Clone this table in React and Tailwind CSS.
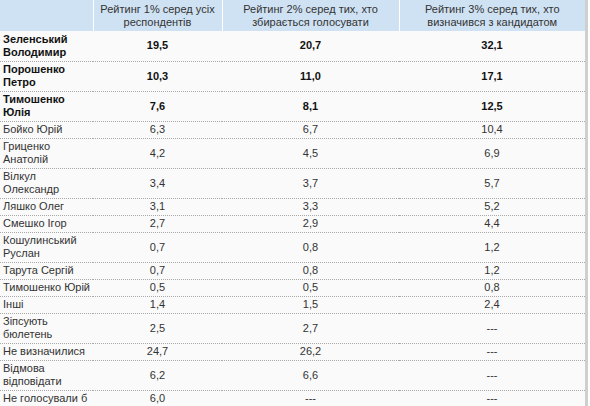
const rows = [
  { name: ['Зеленський', 'Володимир'], a: '19,5', b: '20,7', c: '32,1', bold: true },
  { name: ['Порошенко', 'Петро'], a: '10,3', b: '11,0', c: '17,1', bold: true },
  { name: ['Тимошенко', 'Юлія'], a: '7,6', b: '8,1', c: '12,5', bold: true },
  { name: ['Бойко Юрій'], a: '6,3', b: '6,7', c: '10,4' },
  { name: ['Гриценко', 'Анатолій'], a: '4,2', b: '4,5', c: '6,9' },
  { name: ['Вілкул', 'Олександр'], a: '3,4', b: '3,7', c: '5,7' },
  { name: ['Ляшко Олег'], a: '3,1', b: '3,3', c: '5,2' },
  { name: ['Смешко Ігор'], a: '2,7', b: '2,9', c: '4,4' },
  { name: ['Кошулинський', 'Руслан'], a: '0,7', b: '0,8', c: '1,2' },
  { name: ['Тарута Сергій'], a: '0,7', b: '0,8', c: '1,2' },
  { name: ['Тимошенко Юрій'], a: '0,5', b: '0,5', c: '0,8' },
  { name: ['Інші'], a: '1,4', b: '1,5', c: '2,4' },
  { name: ['Зіпсують', 'бюлетень'], a: '2,5', b: '2,7', c: '---' },
  { name: ['Не визначилися'], a: '24,7', b: '26,2', c: '---' },
  { name: ['Відмова', 'відповідати'], a: '6,2', b: '6,6', c: '---' },
  { name: ['Не голосували б'], a: '6,0', b: '---', c: '---' },
]

const headers = [
  ['Рейтинг 1% серед усіх', 'респондентів'],
  ['Рейтинг 2% серед тих, хто', 'збирається голосувати'],
  ['Рейтинг 3% серед тих, хто', 'визначився з кандидатом'],
]

export default function App() {
  return (
    <div className="h-[406px] w-[590px] overflow-hidden bg-white font-['Liberation_Sans',Arial,sans-serif] text-[11px] leading-[13px] text-[#333]">
      <div className="w-[588px] border-r-[3px] border-[#cfcfcf] bg-[#fafafa]">
        <table className="w-[585px] table-fixed border-collapse">
          <colgroup>
            <col className="w-[93px]" />
            <col className="w-[129px]" />
            <col className="w-[177px]" />
            <col className="w-[186px]" />
          </colgroup>
          <thead>
            <tr className="h-[31px] bg-[#cfe2f3]">
              <th className="border-r border-white p-0" />
              {headers.map((h, i) => (
                <th key={i} className="whitespace-nowrap border-r border-white px-0 py-[2px] text-center font-normal text-[#333] last:border-r-0">
                  {h[0]}
                  <br />
                  {h[1]}
                </th>
              ))}
            </tr>
          </thead>
          <tbody>
            {rows.map((r, i) => (
              <tr
                key={i}
                className={`border-b border-dotted border-[#a8a8a8] ${r.name.length > 1 ? 'h-[30px]' : 'h-[17px]'} ${r.bold ? 'font-bold text-[#111]' : ''}`}
              >
                <td className="whitespace-nowrap px-[3px] py-[1px] align-middle">
                  {r.name[0]}
                  {r.name[1] ? (
                    <>
                      <br />
                      {r.name[1]}
                    </>
                  ) : null}
                </td>
                <td className="py-[1px] text-center align-middle">{r.a}</td>
                <td className="py-[1px] text-center align-middle">{r.b}</td>
                <td className="py-[1px] text-center align-middle">{r.c}</td>
              </tr>
            ))}
          </tbody>
        </table>
      </div>
    </div>
  )
}
